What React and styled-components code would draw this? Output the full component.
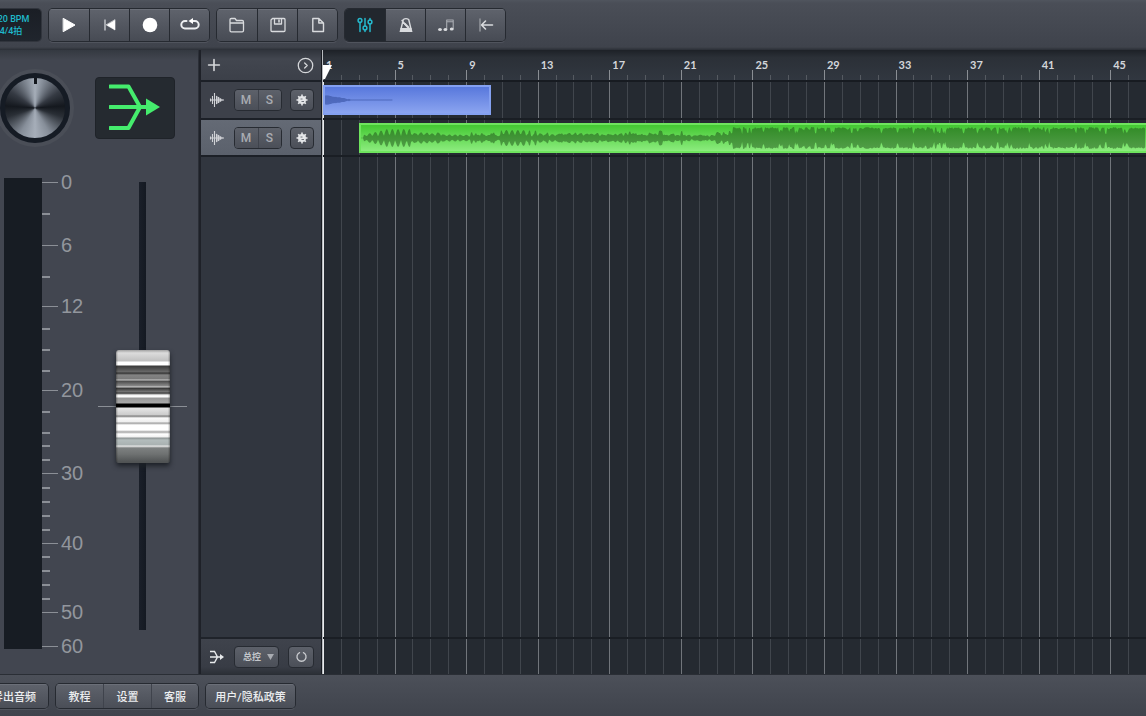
import React, { useState } from 'react';
import styled, { createGlobalStyle, css } from 'styled-components';

const GlobalStyle = createGlobalStyle`
  * {
    box-sizing: border-box;
  }
  body {
    margin: 0;
    background: #252a31;
    overflow: hidden;
    font-family: Roboto, "Noto Sans CJK SC", sans-serif;
    color: #e4e6e9;
  }
  button, select, input {
    font-family: inherit;
    margin: 0;
    padding: 0;
  }
`;

const TOTAL_BARS = 46;

const Page = styled.div`
  display: flex;
  flex-direction: column;
  min-height: 100vh;
`;

/* ---------- toolbar ---------- */

const Toolbar = styled.header`
  display: flex;
  align-items: center;
  gap: 8px;
  height: 50px;
  background: linear-gradient(#50555e, #4a4e57 6%, #3f434c 94%, #2b2f36);
`;

const TempoDisplay = styled.div`
  display: flex;
  flex-direction: column;
  align-items: center;
  justify-content: center;
  flex: none;
  width: 60px;
  height: 32px;
  margin-left: -19px;
  border-radius: 4px;
  background: linear-gradient(#1a1e25, #20252d);
  box-shadow: 0 0 0 1px #31353d;
  color: #1fb9cb;
  font-size: 9px;
  font-weight: 500;
  line-height: 12px;
`;

const ButtonGroup = styled.div`
  display: flex;
  flex: none;
  border-radius: 4px;
  overflow: hidden;
  box-shadow: 0 0 0 1px #262a31, 0 2px 0 #50545d;
`;

const ToolButton = styled.button`
  display: flex;
  align-items: center;
  justify-content: center;
  width: 40px;
  height: 32px;
  border: 0;
  background: linear-gradient(#5f636c, #474b54);
  box-shadow: inset 0 1px 0 #6b6f78;
  color: #d9dbde;

  & + & {
    border-left: 1px solid #262a31;
  }

  ${({ $active }) => $active && css`
    background: #22272e;
    box-shadow: none;
    color: #25b8cc;
  `}
`;

/* ---------- mixer panel ---------- */

const Main = styled.main`
  display: grid;
  grid-template-columns: 199px 124px 1fr;
  flex: 1;
`;

const MixerPanel = styled.aside`
  padding-top: 22px;
  background: linear-gradient(#343941, #424650 10px);
  border-right: 1px solid #2b2f37;
`;

const PanRow = styled.div`
  display: flex;
  align-items: center;
  gap: 25px;
  height: 72px;
`;

const Knob = styled.input`
  appearance: none;
  width: 70px;
  height: 70px;
  border: 5px solid #151b24;
  border-radius: 50%;
  background: conic-gradient(
    #a6aeb9 0deg, #868e99 16deg, #353a43 56deg, #14181e 86deg, #2a2f36 108deg,
    #868e99 150deg, #a6aeb9 180deg, #868e99 210deg, #2a2f36 252deg,
    #14181e 274deg, #353a43 304deg, #868e99 344deg, #a6aeb9 360deg
  );
  box-shadow: 0 0 0 4px #4a4e57;

  &::-webkit-slider-runnable-track {
    height: 60px;
  }
  &::-webkit-slider-thumb {
    appearance: none;
    width: 3px;
    height: 6px;
    background: #12161c;
  }
`;

const RouteButton = styled.button`
  width: 80px;
  height: 62px;
  border: 1px solid #1f2329;
  border-radius: 4px;
  background: #252a30;
`;

const LevelRow = styled.div`
  display: flex;
  align-items: flex-start;
  margin: 34px 0 0 4px;
`;

const Meter = styled.div`
  width: 38px;
  height: 471px;
  background: #171c23;
`;

const Scale = styled.div`
  width: 56px;
  padding-top: 4px;
`;

const Tick = styled.div`
  display: flex;
  align-items: flex-start;
  gap: 3px;
  height: ${({ $gap }) => $gap}px;

  &::before {
    content: '';
    width: ${({ $major }) => ($major ? 16 : 8)}px;
    height: ${({ $major }) => ($major ? 1 : 2)}px;
    background: #8b8f96;
  }
`;

const TickLabel = styled.span`
  margin-top: -11px;
  font-family: "Liberation Sans", Arial, sans-serif;
  font-size: 20px;
  line-height: 22px;
  color: #92969d;
`;

const FaderSlot = styled.div`
  display: flex;
  justify-content: center;
  width: 89px;
  margin-top: 4px;
  background: linear-gradient(#8b8f96, #8b8f96) center / 100% 1px no-repeat;
`;

const Fader = styled.input`
  appearance: none;
  writing-mode: vertical-lr;
  direction: rtl;
  width: 54px;
  height: 448px;
  background: linear-gradient(90deg, #1a1f29, #141922) center / 7px 100% no-repeat;

  &::-webkit-slider-thumb {
    appearance: none;
    width: 54px;
    height: 113px;
    border-radius: 3px;
    box-shadow: 0 3px 5px #1d2127;
    background:
      linear-gradient(90deg, #0005, #0000 2px, #0000 52px, #0005),
      linear-gradient(
        #a2a2a2 0px, #dcdcdc 3px, #c0c0c0 11px, #fff 12px, #fff 15px,
        #3a3a3a 16px, #6a6a6a 22px, #2f2f2f 23px, #838383 25px, #7a7a7a 29px,
        #cfcfcf 30px, #4a4a4a 31px, #8b8b8b 36px, #d5d5d5 37px, #333 38px,
        #7c7c7c 42px, #303030 43px, #f4f4f4 45px, #fff 47px, #999 48px,
        #a8a8a8 53px, #000 54px, #000 57px, #e6e6e6 58px, #cbcbcb 65px,
        #777 66px, #fafafa 68px, #eee 72px, #999 73px, #fff 75px, #fff 80px,
        #a5a5a5 82px, #fff 84px, #f0f0f0 87px, #8d9393 88px, #b3bcbc 90px,
        #a9b1b1 95px, #eee 96px, #7d8080 98px, #6f7272 104px, #505354 112px
      );
  }
`;

/* ---------- track headers ---------- */

const TrackList = styled.section`
  display: flex;
  flex-direction: column;
  border-left: 2px solid #1e2128;
  border-right: 2px solid #171a20;
  background: #31363f;
`;

const HeaderRow = styled.div`
  display: flex;
  align-items: center;
  justify-content: space-between;
  height: ${({ $height }) => $height}px;
  padding: 0 7px 0 8px;
  border-bottom: 2px solid #1c2027;
  background: ${({ $selected }) => ($selected ? 'linear-gradient(#646a75, #5b616c)' : '#3d414a')};
`;

const AddRow = styled(HeaderRow)`
  padding: 0 7px 0 4px;
  background: linear-gradient(#30343c, #42464f 30%, #3c4049);
`;

const MasterRow = styled(HeaderRow)`
  margin-top: auto;
  border-top: 2px solid #1f232a;
  border-bottom: 0;
  background: linear-gradient(#3f434c, #383c45 80%, #2c3037);
`;

const IconButton = styled.button`
  display: flex;
  border: 0;
  background: none;
  color: #d5d7da;
`;

const MuteSolo = styled.div`
  display: flex;
  border: 1px solid #272b32;
  border-radius: 4px;
  overflow: hidden;
`;

const SmallButton = styled.button`
  display: flex;
  align-items: center;
  justify-content: center;
  width: 23px;
  height: 20px;
  border: 0;
  background: linear-gradient(#5d616a, #4b4f58);
  color: #a9acb2;
  font-size: 12px;
  font-weight: 500;

  & + & {
    border-left: 1px solid #3f434c;
  }
`;

const SquareButton = styled(SmallButton)`
  height: 22px;
  width: ${({ $width }) => $width || 24}px;
  border: 1px solid #272b32;
  border-radius: 4px;
  color: #c9cbcf;
`;

const OutputField = styled.div`
  display: grid;
  align-items: center;
  width: 45px;
  height: 22px;
  border: 1px solid #272b32;
  border-radius: 4px;
  background: linear-gradient(#5d616a, #4b4f58);

  & > * {
    grid-area: 1 / 1;
  }
  svg {
    justify-self: end;
    margin-right: 4px;
    pointer-events: none;
  }
`;

const OutputSelect = styled.select`
  appearance: none;
  width: 100%;
  height: 20px;
  padding-left: 8px;
  border: 0;
  background: none;
  color: #c3c6ca;
  font-size: 9px;
  font-weight: 700;
`;

/* ---------- timeline ---------- */

const Timeline = styled.section`
  display: flex;
  flex-direction: column;
  min-width: 0;
  overflow: hidden;
  background: #252a31;
  box-shadow: inset 1px 0 0 #e8eaec, -1px 0 0 #b9bcc0;
`;

const Ruler = styled.div`
  display: grid;
  grid-template-columns: repeat(${TOTAL_BARS}, 1fr);
  align-items: end;
  height: 32px;
  border-bottom: 2px solid #171b21;
  background: linear-gradient(#1d2127, #2b3037 25%, #313740);
`;

const RulerBar = styled.div`
  position: relative;
  min-width: 0;
  height: ${({ $major }) => ($major ? 10 : 5)}px;
  border-left: 1px solid ${({ $major }) => ($major ? '#8a8e94' : '#555a61')};
`;

const BarNumber = styled.span`
  position: absolute;
  left: 2px;
  bottom: 8px;
  font-family: Lato, sans-serif;
  font-size: 11px;
  font-weight: 700;
  line-height: 14px;
  color: #d3d6da;
`;

const Playhead = styled.svg`
  position: absolute;
  left: -1px;
  bottom: 0;
`;

const Lanes = styled.div`
  display: grid;
  flex: 1;

  & > * {
    grid-area: 1 / 1;
    min-width: 0;
  }
`;

const GridLines = styled.div`
  display: grid;
  grid-template-columns: repeat(${TOTAL_BARS}, 1fr);
`;

const GridBar = styled.div`
  border-left: 1px solid ${({ $major }) => ($major ? '#71757b' : '#41464d')};

  &:first-child {
    border-left-color: #e8eaec;
  }
`;

const LaneStack = styled.div`
  display: flex;
  flex-direction: column;
`;

const Lane = styled.div`
  display: grid;
  grid-template-columns: repeat(${TOTAL_BARS}, 1fr);
  height: ${({ $height }) => $height}px;
  padding: 3px 0;
  border-bottom: 2px solid #1a1e24;
`;

const MasterLane = styled.div`
  height: 37px;
  margin-top: auto;
  border-top: 2px solid #1a1e24;
`;

const clipColors = {
  blue: { edge: '#84a0f0', fill: 'linear-gradient(#5878dc, #8ba4f0)', wave: 'linear-gradient(#4560b4, #5f7acb)' },
  green: { edge: '#6fe45e', fill: 'linear-gradient(#43c832, #8cec7e)', wave: '#3d9431' },
};

const Clip = styled.div`
  display: flex;
  align-items: center;
  grid-column: ${({ $from, $to }) => `${$from} / ${$to}`};
  height: 30px;
  border: 2px solid ${({ $color }) => clipColors[$color].edge};
  background: ${({ $color }) => clipColors[$color].fill};
  margin-right: ${({ $trim }) => $trim || 0}px;
  border-right-width: ${({ $open }) => ($open ? 0 : 2)}px;

  svg {
    flex: 1;
    min-width: 0;
    height: 26px;
  }
`;

/* ---------- footer ---------- */

const Footer = styled.footer`
  display: flex;
  align-items: center;
  gap: 8px;
  height: 42px;
  border-top: 1px solid #2a2e35;
  background: linear-gradient(#4c5059, #3f434c);
`;

const FooterGroup = styled(ButtonGroup)`
  margin-left: ${({ $cut }) => ($cut ? -20 : 0)}px;
`;

const FooterButton = styled.button`
  width: ${({ $width }) => $width}px;
  height: 24px;
  border: 0;
  background: linear-gradient(#5f636c, #4a4e57);
  box-shadow: inset 0 1px 0 #6b6f78;
  color: #eceef0;
  font-size: 11px;
  font-weight: 500;
  white-space: nowrap;

  & + & {
    border-left: 1px solid #3f434c;
  }
`;

/* ---------- drawings ---------- */

const Icon = ({ size = 20, children, ...rest }) => (
  <svg width={size} height={size} viewBox="0 0 20 20" fill="none" stroke="currentColor"
    strokeWidth="1.4" strokeLinejoin="round" strokeLinecap="round" aria-hidden="true" {...rest}>
    {children}
  </svg>
);

const PlayIcon = () => <Icon><path d="M4.500 3.500L16 10 4.500 16.500z" fill="#fff" stroke="#fff" strokeWidth="1" /></Icon>;
const RewindIcon = () => (
  <Icon>
    <path d="M5 4.500v11" strokeWidth="1.600" stroke="#b9bcc1" strokeLinecap="butt" />
    <path d="M15 5v10L6.500 10z" fill="#fff" stroke="#fff" strokeWidth=".6" />
  </Icon>
);
const RecordIcon = () => <Icon><circle cx="10" cy="10" r="7.300" fill="#fff" stroke="none" /></Icon>;
const LoopIcon = () => (
  <Icon>
    <path d="M6.500 6H5a3.700 3.700 0 0 0 0 7.400h10A3.700 3.700 0 0 0 15 6H11" strokeWidth="2" stroke="#eceef0" />
    <path d="M13 3v6L8.500 6z" fill="#fff" stroke="none" />
  </Icon>
);
const FolderIcon = () => (
  <Icon strokeWidth="1.300">
    <path d="M3 15.500V4.800Q3 3.500 4.300 3.500H8L9.500 5.500h5.700Q16.500 5.500 16.500 7v8.500Q16.500 16.800 15.200 16.800H4.300Q3 16.800 3 15.500zM3 8h13.500" />
  </Icon>
);
const SaveIcon = () => (
  <Icon strokeWidth="1.300">
    <path d="M4.500 3.500h11.500Q17 3.500 17 4.500v11q0 1-1 1H4q-1 0-1-1V5zM6.500 3.500v5.500h7V3.500" />
    <path d="M11 5v2" strokeWidth="1.600" />
  </Icon>
);
const FileIcon = () => (
  <Icon strokeWidth="1.400">
    <path d="M4.800 3.500h6L15.500 8v8.500H4.800zM10.800 3.500V8h4.700" />
  </Icon>
);
const MixerIcon = () => (
  <Icon strokeWidth="1.500">
    <path d="M5 7.500V16.500M10 3.500v7.500M10 15v1.500M15 3.500v1.500M15 9v7.500" />
    <circle cx="5" cy="5.500" r="1.900" />
    <circle cx="10" cy="13" r="1.900" />
    <circle cx="15" cy="7" r="1.900" />
  </Icon>
);
const MetronomeIcon = () => (
  <Icon strokeWidth="1.400">
    <path d="M5 14L7.300 4.500Q10 2.800 12.700 4.500L15 14M11.500 12L6 5.500" />
    <path d="M4.500 13h11l1 4h-13z" fill="currentColor" stroke="none" />
    <path d="M9 9l3.500 3.500" strokeWidth="2" />
  </Icon>
);
const NotesIcon = () => (
  <Icon strokeWidth="1.100">
    <path d="M10.700 14V5h6.500v9M10.700 6.800h6.500" stroke="#a9acb2" />
    <g fill="currentColor" stroke="none">
      <ellipse cx="4" cy="14.500" rx="1.900" ry="1.500" />
      <ellipse cx="9.400" cy="14.500" rx="1.900" ry="1.500" />
      <ellipse cx="15.700" cy="14" rx="1.900" ry="1.500" />
    </g>
  </Icon>
);
const BackIcon = () => (
  <Icon strokeWidth="1.600">
    <path d="M4 4v12" stroke="#8f9399" />
    <path d="M16.500 10H5.500M9.500 6l-4 4 4 4" />
  </Icon>
);

const RouteIcon = () => (
  <svg width="52" height="48" viewBox="0 0 52 48" fill="none" stroke="#45ec6d" strokeWidth="4" aria-hidden="true">
    <path d="M1 3.500h18.500L31 24 19.500 45H1M1 24h38" strokeLinejoin="round" strokeLinecap="round" />
    <path d="M37 15.500L51 24 37 32.500z" fill="#45ec6d" stroke="none" />
  </svg>
);

const MergeIcon = () => (
  <svg width="16" height="14" viewBox="0 0 16 14" fill="none" stroke="#e8eaec" strokeWidth="1.400" aria-hidden="true">
    <path d="M1 1.500h4.500L8.500 7l-3 5.500H1M1 7h11" />
    <path d="M11 4l4 3-4 3z" fill="#e8eaec" stroke="none" />
  </svg>
);

const TrackIcon = () => (
  <svg width="16" height="16" viewBox="0 0 16 16" stroke="#cfd1d5" strokeWidth="1.100" aria-hidden="true">
    <path d="M1.500 6.500v3M3.500 4v8M5.500 1v14M7.500 4v8M9.500 5v6M11.500 6.500v3M1 8h14" />
    <path d="M7 3.500L14.500 8 7 12.500z" fill="#cfd1d5" stroke="none" opacity=".6" />
  </svg>
);

const GearIcon = () => (
  <svg width="12" height="12" viewBox="0 0 12 12" fill="none" stroke="#e6e8ea" aria-hidden="true">
    <circle cx="6" cy="6" r="4" fill="#e1e3e5" stroke="none" />
    <path d="M6 .5v11M.5 6h11M2.200 2.200l7.600 7.600M9.800 2.200L2.200 9.800" strokeWidth="1.600" />
    <path d="M4.500 5h2M5.500 7.500h2.500" stroke="#70747d" />
  </svg>
);

// Closed outline mirrored around the centre line
const wavePath = (envelope, width, mid) => {
  const top = [];
  const bottom = [];
  for (let x = 0; x < width; x += 1) {
    const a = envelope(x);
    top.push(`${x} ${(mid - a).toFixed(1)}`);
    bottom.unshift(`${x} ${(mid + a).toFixed(1)}`);
  }
  return `M${top.join('L')}L${bottom.join('L')}Z`;
};

const noise = (n) => {
  const v = Math.sin(n * 127.1) * 43758.5453;
  return v - Math.floor(v);
};

const drumEnvelope = (x) => {
  const lobe = Math.abs(Math.sin((x * Math.PI) / 5.7));
  const n = noise(Math.floor(x / 2));
  if (x < 3) return 0.3;
  if (x < 50) return 1.5 + lobe * Math.min(7.5, 1 + x / 4);
  if (x < 82) return 2 + lobe * 2.5 + n * 1.5;
  if (x < 140) return 1 + lobe * 1.8 + (n > 0.85 ? 3 : n);
  if (x < 165) return 2.5 + lobe * 5.5;
  if (x < 325) return 1.5 + lobe * 1.4 + (n > 0.9 ? 4.5 : n * 3);
  if (x < 355) return 1 + lobe + n * 1.5;
  if (x < 372) return 2 + n * 5;
  // dense part: near full height with narrow notches
  const section = noise(Math.floor(x / 26) + 5);
  if (n > 0.62 + section * 0.3) return 4 + noise(x + 3) * 5;
  return 9 + noise(x) * 2;
};

const decayEnvelope = (x) => {
  if (x < 26) return 4.5 * (1 - x / 27) + noise(x) * 0.8;
  return x < 68 ? 0.5 : 0;
};

const Wave = ({ width, envelope, from, to }) => (
  <svg viewBox={`0 0 ${width} 26`} preserveAspectRatio="none" aria-hidden="true">
    <defs>
      <linearGradient id={`wave-${width}`} x1="0" y1="0" x2="0" y2="26" gradientUnits="userSpaceOnUse">
        <stop offset="0" stopColor={from} />
        <stop offset="1" stopColor={to} />
      </linearGradient>
    </defs>
    <path d={wavePath(envelope, width, 13)} fill={`url(#wave-${width})`} />
  </svg>
);

/* ---------- data ---------- */

const transport = [
  { label: '播放', icon: PlayIcon },
  { label: '回到开头', icon: RewindIcon },
  { label: '录音', icon: RecordIcon },
  { label: '循环', icon: LoopIcon },
];
const files = [
  { label: '打开', icon: FolderIcon },
  { label: '保存', icon: SaveIcon },
  { label: '新建', icon: FileIcon },
];
const views = [
  { label: '混音器', icon: MixerIcon, active: true },
  { label: '节拍器', icon: MetronomeIcon },
  { label: '音符', icon: NotesIcon },
  { label: '返回', icon: BackIcon },
];

// distance in px to the next tick, label on the main ones
const ticks = [
  [31, '0'], [32], [31, '6'], [30],
  [22, '12'], [21], [21], [20],
  [21, '20'], [21], [13], [14], [14],
  [14, '30'], [14], [14], [14], [14],
  [13, '40'], [14], [14], [14], [14],
  [34, '50'], [0, '60'],
];

const bars = Array.from({ length: TOTAL_BARS }, (_, i) => i + 1);
const isMajor = (bar) => bar % 4 === 1;

const tracks = [
  { id: 1, selected: false },
  { id: 2, selected: true },
];

const ToolGroup = ({ items }) => (
  <ButtonGroup>
    {items.map(({ label, icon: Glyph, active }) => (
      <ToolButton key={label} aria-label={label} $active={active}>
        <Glyph />
      </ToolButton>
    ))}
  </ButtonGroup>
);

const App = () => {
  const [volume, setVolume] = useState(50);
  const [pan, setPan] = useState(50);

  return (
    <Page>
      <GlobalStyle />
      <Toolbar>
        <TempoDisplay>
          <span>120 BPM</span>
          <span>4/4拍</span>
        </TempoDisplay>
        <ToolGroup items={transport} />
        <ToolGroup items={files} />
        <ToolGroup items={views} />
      </Toolbar>

      <Main>
        <MixerPanel>
          <PanRow>
            <Knob type="range" aria-label="声像" value={pan} onChange={(e) => setPan(e.target.value)} />
            <RouteButton aria-label="输出"><RouteIcon /></RouteButton>
          </PanRow>
          <LevelRow>
            <Meter />
            <Scale>
              {ticks.map(([gap, label], i) => (
                <Tick key={i} $gap={gap} $major={Boolean(label)}>
                  {label && <TickLabel>{label}</TickLabel>}
                </Tick>
              ))}
            </Scale>
            <FaderSlot>
              <Fader type="range" aria-label="音量" value={volume} onChange={(e) => setVolume(e.target.value)} />
            </FaderSlot>
          </LevelRow>
        </MixerPanel>

        <TrackList>
          <AddRow $height={32}>
            <IconButton aria-label="添加音轨">
              <Icon size={18}><path d="M10 4v12M4 10h12" strokeWidth="1.800" /></Icon>
            </IconButton>
            <IconButton aria-label="展开">
              <Icon size={17} strokeWidth="1.500"><circle cx="10" cy="10" r="8.500" /><path d="M9 7l3 3-3 3" /></Icon>
            </IconButton>
          </AddRow>
          {tracks.map(({ id, selected }) => (
            <HeaderRow key={id} $height={selected ? 37 : 38} $selected={selected}>
              <TrackIcon />
              <MuteSolo>
                <SmallButton>M</SmallButton>
                <SmallButton>S</SmallButton>
              </MuteSolo>
              <SquareButton aria-label="音轨设置"><GearIcon /></SquareButton>
            </HeaderRow>
          ))}
          <MasterRow $height={37}>
            <MergeIcon />
            <OutputField>
              <OutputSelect aria-label="输出通道"><option>总控</option></OutputSelect>
              <svg width="7" height="6" viewBox="0 0 8 7"><path d="M0 0h8L4 7z" fill="#a9acb2" /></svg>
            </OutputField>
            <SquareButton aria-label="重置" $width={26}>
              <Icon size={13} strokeWidth="2"><path d="M7 4a7 7 0 1 0 6 0" /></Icon>
            </SquareButton>
          </MasterRow>
        </TrackList>

        <Timeline>
          <Ruler>
            {bars.map((bar) => (
              <RulerBar key={bar} $major={isMajor(bar)}>
                {isMajor(bar) && <BarNumber>{bar}</BarNumber>}
                {bar === 1 && (
                  <Playhead width="10" height="16" viewBox="0 0 10 16"><path d="M0 1H9L2 15H0z" fill="#fff" /></Playhead>
                )}
              </RulerBar>
            ))}
          </Ruler>
          <Lanes>
            <GridLines>
              {bars.map((bar) => <GridBar key={bar} $major={isMajor(bar)} />)}
            </GridLines>
            <LaneStack>
              <Lane $height={38}>
                <Clip $color="blue" $from={1} $to={11} $trim={11}>
                  <Wave width={164} envelope={decayEnvelope} from="#4560b4" to="#5671c4" />
                </Clip>
              </Lane>
              <Lane $height={37}>
                <Clip $color="green" $from={3} $to={TOTAL_BARS + 1} $open>
                  <Wave width={785} envelope={drumEnvelope} from="#2f8a24" to="#559f4b" />
                </Clip>
              </Lane>
              <MasterLane />
            </LaneStack>
          </Lanes>
        </Timeline>
      </Main>

      <Footer>
        <FooterGroup $cut>
          <FooterButton $width={68}>导出音频</FooterButton>
        </FooterGroup>
        <FooterGroup>
          <FooterButton $width={47}>教程</FooterButton>
          <FooterButton $width={48}>设置</FooterButton>
          <FooterButton $width={47}>客服</FooterButton>
        </FooterGroup>
        <FooterGroup>
          <FooterButton $width={89}>用户/隐私政策</FooterButton>
        </FooterGroup>
      </Footer>
    </Page>
  );
};

export default App;
